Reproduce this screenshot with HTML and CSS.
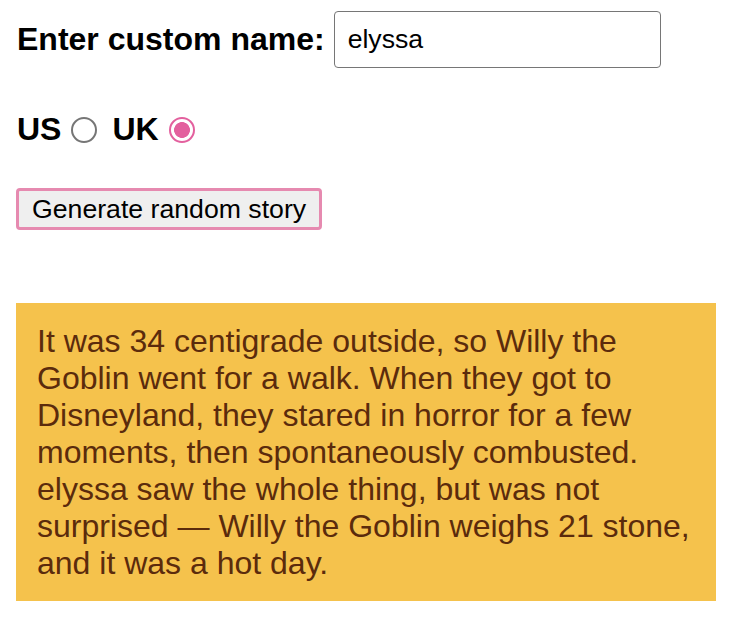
FILE: index.html
```html
<!DOCTYPE html>
<html>
<head>
<meta charset="utf-8">
<link rel="stylesheet" href="styles.css">
</head>
<body>
<div class="page">
  <div class="name-row">
    <label class="label" for="customname">Enter custom name:</label>
    <input id="customname" class="name-input" type="text" value="elyssa">
  </div>
  <div class="radio-row">
    <label class="label" for="us">US</label>
    <input id="us" class="radio" type="radio" name="ukus">
    <label class="label uk" for="uk">UK</label>
    <input id="uk" class="radio" type="radio" name="ukus" checked>
  </div>
  <div class="btn-row">
    <button class="randomize">Generate random story</button>
  </div>
  <p class="story">It was 34 centigrade outside, so Willy the Goblin went for a walk. When they got to Disneyland, they stared in horror for a few moments, then spontaneously combusted. elyssa saw the whole thing, but was not surprised — Willy the Goblin weighs 21 stone, and it was a hot day.</p>
</div>
</body>
</html>
```
FILE: styles.css
```css
html, body {
  margin: 0;
  padding: 0;
  background: #fff;
}
.page {
  padding: 11px 16px 0 17px;
  font-family: "Liberation Sans", Arial, sans-serif;
  width: 700px;
}
.name-row {
  display: flex;
  align-items: center;
  gap: 9px;
}
.label {
  font-weight: bold;
  font-size: 32px;
  line-height: 37px;
  color: #000;
}
.name-input {
  box-sizing: border-box;
  width: 327px;
  height: 57px;
  margin: 0;
  border: 1px solid #767676;
  border-radius: 4px;
  padding: 0 13px;
  font-family: "Liberation Sans", Arial, sans-serif;
  font-size: 26.67px;
  color: #000;
}
.radio-row {
  display: flex;
  align-items: center;
  margin-top: 43px;
}
.radio {
  appearance: none;
  -webkit-appearance: none;
  box-sizing: border-box;
  width: 26px;
  height: 26px;
  margin: 0 0 0 10px;
  border: 2px solid #767676;
  border-radius: 50%;
  background: #fff;
}
.radio:checked {
  border-color: #e3609e;
  background: radial-gradient(circle, #e3609e 0 7.6px, #fff 8.2px);
}
.uk {
  margin-left: 15px;
}
.btn-row {
  margin-top: 40px;
  margin-left: -1px;
}
.randomize {
  box-sizing: border-box;
  height: 42px;
  margin: 0;
  background: #efefef;
  border: 3px solid #e68ab0;
  border-radius: 4px;
  font-family: "Liberation Sans", Arial, sans-serif;
  font-size: 26.67px;
  color: #000;
  padding: 0 13px;
}
.story {
  margin: 73px 0 0 -1px;
  background: #f5c24c;
  color: #5b2b0c;
  font-size: 32px;
  line-height: 37px;
  padding: 20px 20px 19px 21px;
  width: 659px;
}
```
